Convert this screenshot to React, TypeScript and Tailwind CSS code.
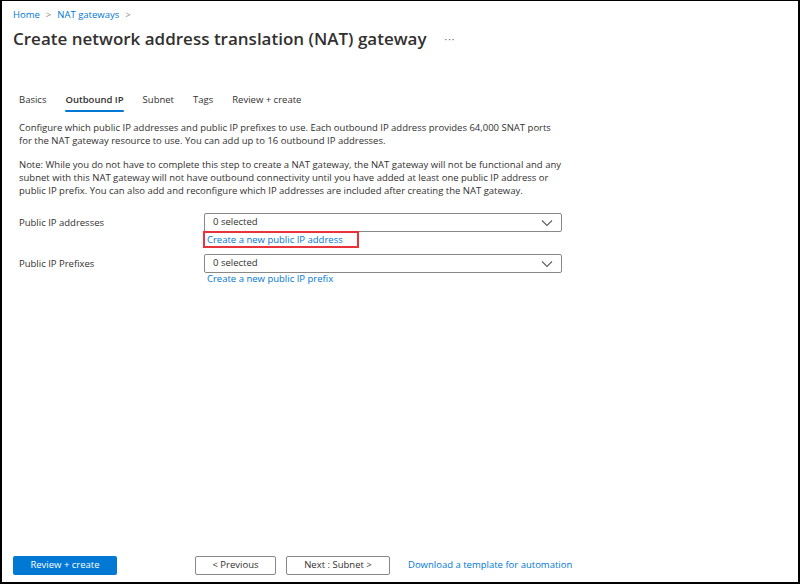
import React from "react";

const tabs = ["Basics", "Outbound IP", "Subnet", "Tags", "Review + create"];

const Chevron: React.FC = () => (
  <svg width="12" height="8" viewBox="0 0 12 8" fill="none">
    <path d="M1 1.5 L6 6.5 L11 1.5" stroke="#605e5c" strokeWidth="1.1" />
  </svg>
);

const FieldRow: React.FC<{ label: string; link: string; highlight?: boolean }> = ({ label, link, highlight }) => (
  <div className="flex">
    <div className="w-[185px] pt-[3px] text-[9.5px] text-[#323130]">{label}</div>
    <div className="w-[358px]">
      <div className="flex h-[19px] items-center justify-between rounded-[2px] border border-[#8a8886] pl-[8px] pr-[8px] text-[9.5px] text-[#323130]">
        <span>0 selected</span>
        <Chevron />
      </div>
      <div className="mt-[-1px] flex">
        <span
          className={
            highlight
              ? "ml-[-1px] h-[17px] border-2 border-[#e8333a] pl-[2px] pr-[14px] text-[9.5px] leading-[13px] text-[#0078d4]"
              : "pl-[3px] text-[9.5px] text-[#0078d4]"
          }
        >
          {link}
        </span>
      </div>
    </div>
  </div>
);

const App: React.FC = () => {
  return (
    <div
      className="flex h-[584px] w-[800px] flex-col overflow-hidden border-b-2 border-l-2 border-r-2 border-t border-black bg-white"
      style={{ fontFamily: '"Open Sans", "Noto Sans", sans-serif' }}
    >
      <div className="pl-[11px] pt-[7px]">
        <div className="flex items-center gap-[6px] text-[9.5px] text-[#0078d4]">
          <span>Home</span>
          <span className="text-[#8a8886]">&gt;</span>
          <span>NAT gateways</span>
          <span className="text-[#8a8886]">&gt;</span>
        </div>
        <div className="mt-[4px] flex items-center">
          <h1 className="text-[17px] font-semibold text-[#323130]">Create network address translation (NAT) gateway</h1>
          <span className="ml-[18px] text-[10px] tracking-[1px] text-[#605e5c]">···</span>
        </div>
      </div>

      <div className="mt-[41px] flex gap-[19px] pl-[17px] text-[9.5px] text-[#323130]">
        {tabs.map((t) => (
          <div key={t} className="flex flex-col items-center">
            <span className={t === "Outbound IP" ? "font-semibold" : ""}>{t}</span>
            <span className={t === "Outbound IP" ? "mt-[3px] h-[2px] w-full rounded bg-[#0078d4]" : "mt-[3px] h-[2px]"} />
          </div>
        ))}
      </div>

      <div className="mt-[9px] whitespace-nowrap pl-[17px] text-[9.5px] leading-[13px] text-[#323130]">
        <p>
          Configure which public IP addresses and public IP prefixes to use. Each outbound IP address provides 64,000 SNAT ports
          <br />
          for the NAT gateway resource to use. You can add up to 16 outbound IP addresses.
        </p>
        <p className="mt-[11px]">
          Note: While you do not have to complete this step to create a NAT gateway, the NAT gateway will not be functional and any
          <br />
          subnet with this NAT gateway will not have outbound connectivity until you have added at least one public IP address or
          <br />
          public IP prefix. You can also add and reconfigure which IP addresses are included after creating the NAT gateway.
        </p>
      </div>

      <div className="mt-[16px] flex flex-col gap-[6px] pl-[17px]">
        <FieldRow label="Public IP addresses" link="Create a new public IP address" highlight />
        <FieldRow label="Public IP Prefixes" link="Create a new public IP prefix" />
      </div>

      <div className="mt-auto mb-[7px] flex items-center pl-[11px] text-[9.5px]">
        <button className="h-[19px] w-[104px] rounded-[2px] bg-[#0078d4] text-white">Review + create</button>
        <button className="ml-[78px] h-[19px] w-[81px] rounded-[2px] border border-[#8a8886] text-[#323130]">&lt; Previous</button>
        <button className="ml-[10px] h-[19px] w-[104px] rounded-[2px] border border-[#8a8886] text-[#323130]">Next : Subnet &gt;</button>
        <span className="ml-[18px] text-[#0078d4]">Download a template for automation</span>
      </div>
    </div>
  );
};

export default App;
